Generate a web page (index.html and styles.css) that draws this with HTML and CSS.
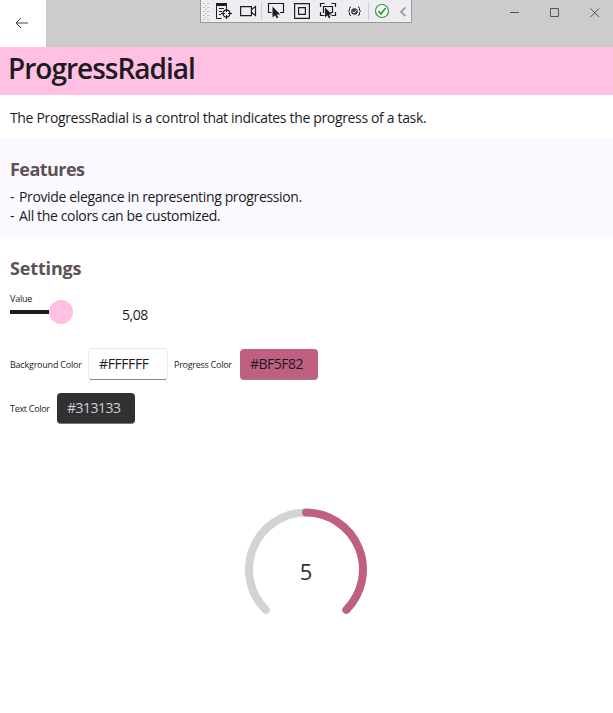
FILE: index.html
```html
<!DOCTYPE html>
<html lang="en">
<head>
<meta charset="utf-8">
<title>ProgressRadial</title>
<link rel="stylesheet" href="styles.css">
</head>
<body>
<header class="titlebar">
  <button class="back" aria-label="Back"><svg width="14" height="12" viewBox="0 0 14 12"><path d="M6 1 1 6l5 5M1 6h12"/></svg></button>
  <div class="window-buttons">
    <svg width="10" height="10" viewBox="0 0 10 10"><path d="M0 4.500h9"/></svg>
    <svg width="10" height="10" viewBox="0 0 10 10"><path d="M.5.5h8v8h-8z"/></svg>
    <svg width="10" height="10" viewBox="0 0 10 10"><path d="m.5.5 8.500 8.500m0-8.500-8.500 8.500"/></svg>
  </div>
  <svg class="debug-bar" width="212" height="23" viewBox="200 0 212 23">
    <defs><pattern id="grip" x="203" y="3" width="6" height="4" patternUnits="userSpaceOnUse"><path fill="#bfc0c8" d="M0 0h2v1H0zM4 0h2v1H4zM2 2h2v1H2z"/></pattern></defs>
    <path fill="#eeeef2" stroke="#999" d="M200.500-1v23.500h211V-1z"/>
    <path fill="url(#grip)" d="M203 3h6v17h-6z"/>
    <path stroke="#cccedb" d="M261.500 2v18M368.500 2v18"/>
    <g fill="none" stroke="#1e1e1e">
      <path stroke-width="3" d="M216 4.500h11"/>
      <path d="M216.500 4v14.500h5M226.500 4v4M219 8.500h5M219 11.500h3M219 14.500h2"/>
      <circle cx="226.500" cy="13.500" r="3.500" stroke-width="1.300"/>
      <path d="M226.500 8v4m0 3v4m-5.500-5.500h4m3 0h4"/>
      <path stroke-width="1.200" d="M240.600 6.600h10.800v9h-10.800zM251.500 9.500l4-3v9l-4-3"/>
      <path stroke-width="1.200" d="M271.500 12.500h-3v-9h15v9H280"/>
      <path fill="#1e1e1e" stroke="none" d="M272.500 6.500v11l2.600-2.300 1.500 3 1.700-.8-1.500-3h3.500z"/>
      <path stroke-width="1.200" d="M294.600 3.600h14.800v14.800h-14.800zM298.600 7.600h6.800v6.800h-6.800z"/>
      <path stroke-width="1.200" d="M320.500 7V3.500h4m7 0h4V7m0 5v3.500h-4m-7 0h-4V12M324 12.500h-.5v-6h9v6h-2"/>
      <path fill="#1e1e1e" stroke="none" d="M325 7.500v10l2.400-2.300 1.400 3 1.700-.8-1.400-3h3z"/>
      <path d="M351 7q-1.500 0-1.500 1.500v1.500l-1 1.200 1 1.200v1.700q0 1.400 1.500 1.400M358 7q1.500 0 1.500 1.500v1.500l1 1.200-1 1.200v1.700q0 1.400-1.500 1.400"/>
      <circle cx="354.500" cy="11.500" r="3.300" fill="#424242" stroke="none"/>
      <path stroke="#eeeef2" d="m352.500 11.500 1.500 1.500 2.600-3"/>
      <circle cx="382" cy="11" r="6.500" fill="#f5fff5" stroke="#389438" stroke-width="1.200"/>
      <path stroke="#2d922d" stroke-width="1.500" d="m378.500 11 2.500 3 4.500-6"/>
      <path stroke="#96969c" stroke-width="1.700" d="m405.500 7.500-4.500 4.300 4.500 4.300"/>
    </g>
  </svg>
</header>
<h1>ProgressRadial</h1>
<p class="intro">The ProgressRadial is a control that indicates the progress of a task.</p>
<section class="features">
  <h2>Features</h2>
  <p><span class="dash">-</span>Provide elegance in representing progression.</p>
  <p><span class="dash">-</span>All the colors can be customized.</p>
</section>
<main class="settings">
  <h2 class="settings-title">Settings</h2>
  <div class="slider-row">
    <div class="slider"><label>Value</label><div class="track"><i></i></div></div>
    <span class="value">5,08</span>
  </div>
  <div class="fields">
    <label class="bg-label">Background Color</label><div class="box white">#FFFFFF</div>
    <label class="progress-label">Progress Color</label><div class="box rose">#BF5F82</div>
  </div>
  <div class="fields second">
    <label>Text Color</label><div class="box dark">#313133</div>
  </div>
  <svg class="radial" width="124" height="124" viewBox="-62 -62 124 124">
    <g fill="none" stroke-width="8" stroke-linecap="round">
      <path stroke="#d3d3d3" d="M-40.300 39.800A57 57 0 0 1 0-57.500"/>
      <path stroke="#bf5f82" d="M0-57.500A57 57 0 0 1 40.300 39.800"/>
    </g>
    <text x="0" y="9.500" text-anchor="middle">5</text>
  </svg>
</main>
</body>
</html>
```
FILE: styles.css
```css
* { box-sizing: border-box; }
body { margin: 0; height: 713px; overflow: hidden; background: #fff; color: #1c1b1f; font: 14px/19px "Open Sans", "Noto Sans", sans-serif; }
h1, h2, p { margin: 0; white-space: nowrap; }
svg { display: block; }
.titlebar { position: relative; display: flex; justify-content: space-between; height: 47px; background: #ccc; }
.back { width: 46px; padding: 0 0 0 15px; border: 0; background: #fff; }
.back svg, .window-buttons svg { fill: none; stroke: #555; stroke-width: 1; }
.back svg { margin-top: -1px; stroke: #444; }
.window-buttons { display: flex; gap: 30px; padding: 8px 13px 0 0; }
.debug-bar { position: absolute; left: 200px; top: 0; }
h1 { height: 48px; padding: 3px 0 0 8px; background: #ffc0e3; font-size: 28px; line-height: 37px; font-weight: 600; letter-spacing: -1px; }
.intro { height: 43px; padding: 13px 0 0 10px; letter-spacing: -.34px; }
.features { height: 99px; padding: 19px 0 0 10px; background: #faf9ff; letter-spacing: -.36px; }
.dash { display: inline-block; width: 9px; }
h2 { height: 31px; color: #5d5254; font-size: 18px; line-height: 24px; font-weight: 700; letter-spacing: -.55px; }
.settings-title { letter-spacing: -.15px; }
.features p { position: relative; top: -1px; }
.settings { padding: 19px 0 0 10px; }
.slider-row { display: flex; height: 61px; padding-top: 6px; }
.slider { width: 112px; }
label { display: block; font-size: 9px; line-height: 12px; letter-spacing: -.22px; white-space: nowrap; }
.track { display: flex; align-items: center; height: 24px; margin-top: -5px; }
.track::before { content: ""; width: 39px; height: 4px; background: #1b1a1c; }
.track i { width: 24px; height: 24px; border-radius: 50%; background: #ffc0e3; }
.value { padding-top: 12px; letter-spacing: -.5px; }
.fields { display: flex; align-items: center; height: 32px; }
.fields label { padding-top: 1px; }
.bg-label { width: 78px; }
.progress-label { width: 66px; margin-left: 6px; letter-spacing: -.27px; }
.second { margin-top: 12px; }
.second label { width: 47px; letter-spacing: -.3px; }
.box { width: 78px; height: 31px; margin-top: 1px; padding: 5px 0 0 10px; border-radius: 4px; line-height: 20px; letter-spacing: -.5px; }
.white { width: 80px; height: 32px; margin: 0; padding: 5px 0 0 10px; border: 1px solid #ececec; border-bottom-color: #888; }
.white { letter-spacing: -.4px; }
.rose { background: #bf5f82; border-bottom: 1px solid #9a8087; }
.dark { background: #313133; border-bottom: 1px solid #777; color: #d0d0d0; }
.radial { margin: 84px 0 0 234px; }
.radial text { fill: #313133; font-size: 22px; }
```
